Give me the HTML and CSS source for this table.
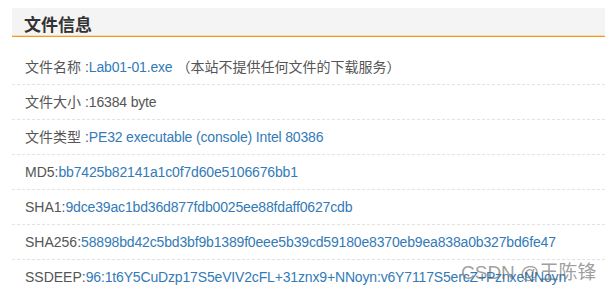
FILE: index.html
```html
<!DOCTYPE html>
<html lang="zh-CN">
<head>
<meta charset="utf-8">
<link rel="stylesheet" href="styles.css">
</head>
<body>
<div class="panel">
  <div class="head"><h2 class="title">文件信息</h2></div>
  <ul class="list">
    <li class="row">文件名称 :<span class="val">Lab01-01.exe</span> （本站不提供任何文件的下载服务）</li>
    <li class="row">文件大小 :<span class="plain">16384 byte</span></li>
    <li class="row">文件类型 :<span class="val">PE32 executable (console) Intel 80386</span></li>
    <li class="row">MD5:<span class="val">bb7425b82141a1c0f7d60e5106676bb1</span></li>
    <li class="row">SHA1:<span class="val">9dce39ac1bd36d877fdb0025ee88fdaff0627cdb</span></li>
    <li class="row">SHA256:<span class="val">58898bd42c5bd3bf9b1389f0eee5b39cd59180e8370eb9ea838a0b327bd6fe47</span></li>
    <li class="row last">SSDEEP:<span class="val">96:1t6Y5CuDzp17S5eVIV2cFL+31znx9+NNoyn:v6Y7117S5ercZ+PznxeNNoyn</span></li>
  </ul>
</div>
<div class="watermark">CSDN @王陈锋</div>
</body>
</html>
```
FILE: styles.css
```css
html, body {
  margin: 0;
  padding: 0;
  background: #fff;
}
body {
  padding: 8px 0 0 12px;
  font-family: "Liberation Sans", Arial, "Noto Sans CJK SC", sans-serif;
  color: #555;
  font-size: 14px;
  overflow: hidden;
  height: 291px;
  box-sizing: border-box;
}
.head {
  background: #f4f4f4;
  height: 29px;
  box-sizing: border-box;
  border-bottom: 1px solid #f39a1e;
  box-shadow: inset 0 -1px 0 #f8dcb6;
  padding-left: 12px;
  display: flex;
  align-items: center;
}
.title {
  margin: 0;
  font-family: "Noto Sans CJK SC", sans-serif;
  font-size: 17px;
  font-weight: 700;
  color: #333;
  line-height: 1;
  padding-top: 3px;
}
.list {
  list-style: none;
  margin: 13px 0 0 0;
  padding: 0;
}
.row {
  height: 34px;
  line-height: 35px;
  padding-left: 13px;
  border-bottom: 1px dashed #e3e3e3;
  white-space: nowrap;
}
.row.last {
  border-bottom: none;
}
.val {
  color: #337ab7;
  letter-spacing: -0.16px;
}
.plain {
  letter-spacing: -0.16px;
}
.watermark {
  position: absolute;
  left: 461px;
  top: 257px;
  font-family: "Liberation Sans", Arial, "Noto Sans CJK SC", sans-serif;
  font-size: 19px;
  color: rgba(95, 95, 95, 0.62);
  white-space: nowrap;
}
```
